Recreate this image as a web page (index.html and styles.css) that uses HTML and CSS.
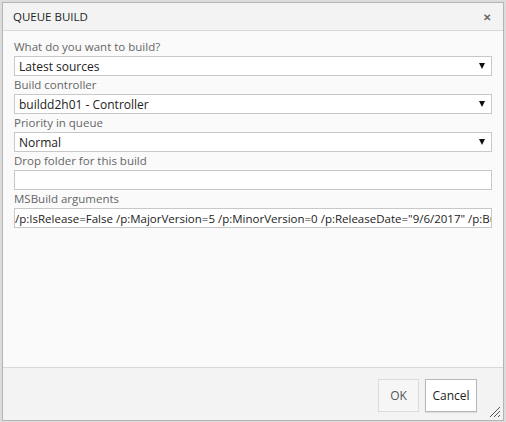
FILE: index.html
```html
<!DOCTYPE html>
<html>
<head>
<meta charset="utf-8">
<link rel="stylesheet" href="styles.css">
</head>
<body>
<div class="dialog">
  <div class="titlebar">
    <span class="title">QUEUE BUILD</span>
    <span class="close">&#x2715;</span>
  </div>
  <div class="content">
    <div class="field">
      <div class="label">What do you want to build?</div>
      <div class="box select"><span>Latest sources</span><span class="arrow"></span></div>
    </div>
    <div class="field">
      <div class="label">Build controller</div>
      <div class="box select"><span>buildd2h01 - Controller</span><span class="arrow"></span></div>
    </div>
    <div class="field">
      <div class="label">Priority in queue</div>
      <div class="box select"><span>Normal</span><span class="arrow"></span></div>
    </div>
    <div class="field">
      <div class="label">Drop folder for this build</div>
      <div class="box input"></div>
    </div>
    <div class="field">
      <div class="label">MSBuild arguments</div>
      <div class="box input args"><span>/p:IsRelease=False /p:MajorVersion=5 /p:MinorVersion=0 /p:ReleaseDate="9/6/2017" /p:Bu</span></div>
    </div>
  </div>
  <div class="footer">
    <button class="btn ok">OK</button>
    <button class="btn cancel">Cancel</button>
    <svg class="grip" width="12" height="12" viewBox="0 0 12 12">
      <line x1="1" y1="11" x2="11" y2="1" stroke="#555" stroke-width="1"/>
      <line x1="5" y1="11" x2="11" y2="5" stroke="#555" stroke-width="1"/>
      <line x1="9" y1="11" x2="11" y2="9" stroke="#555" stroke-width="1"/>
    </svg>
  </div>
</div>
</body>
</html>
```
FILE: styles.css
```css
html, body {
  margin: 0;
  padding: 0;
}
body {
  width: 506px;
  height: 422px;
  background: #dcdcdc;
  box-sizing: border-box;
  padding: 2px 2px 1px 2px;
  font-family: "Open Sans", "Noto Sans", sans-serif;
  font-size: 11.5px;
  overflow: hidden;
}
.dialog {
  height: 100%;
  box-sizing: border-box;
  border: 1px solid #b4b4b4;
  background: #fafafa;
  display: flex;
  flex-direction: column;
}
.titlebar {
  height: 27px;
  background: #f3f3f3;
  border-bottom: 1px solid #d8d8d8;
  display: flex;
  align-items: center;
  justify-content: space-between;
  padding: 0 12px 0 10px;
  flex-shrink: 0;
}
.title {
  font-size: 11.5px;
  color: #222;
}
.close {
  font-size: 10px;
  font-weight: bold;
  color: #666;
}
.content {
  flex: 1;
  padding: 7px 11px 0 11px;
  display: flex;
  flex-direction: column;
}
.field {
  display: flex;
  flex-direction: column;
}
.label {
  height: 18px;
  line-height: 17px;
  color: #666;
}
.box {
  height: 20px;
  box-sizing: border-box;
  border: 1px solid #c8c8c8;
  background: #fff;
  color: #222;
  display: flex;
  align-items: center;
  overflow: hidden;
  white-space: nowrap;
  font-size: 12px;
}
.select {
  justify-content: space-between;
  padding: 0 6px 0 4px;
}
.arrow {
  width: 0;
  height: 0;
  border-left: 3.5px solid transparent;
  border-right: 3.5px solid transparent;
  border-top: 6px solid #111;
}
.args {
  padding-left: 0;
  font-size: 11.5px;
}
.footer {
  height: 52px;
  flex-shrink: 0;
  background: #f3f3f3;
  border-top: 1px solid #d8d8d8;
  display: flex;
  align-items: center;
  justify-content: flex-end;
  gap: 6px;
  padding: 0 26px 0 0;
  position: relative;
}
.btn {
  font-family: inherit;
  font-size: 12px;
  height: 33px;
  box-sizing: border-box;
  background: #fff;
  border: 1px solid #c8c8c8;
  color: #222;
  padding: 0;
  margin-top: 2px;
}
.ok {
  width: 41px;
  background: #f6f6f6;
  border-color: #dcdcdc;
  color: #555;
}
.cancel {
  width: 52px;
  border-color: #b8b8b8;
  box-shadow: 0 1px 1px rgba(0,0,0,0.08);
}
.grip {
  position: absolute;
  right: 2px;
  bottom: 2px;
}
```
